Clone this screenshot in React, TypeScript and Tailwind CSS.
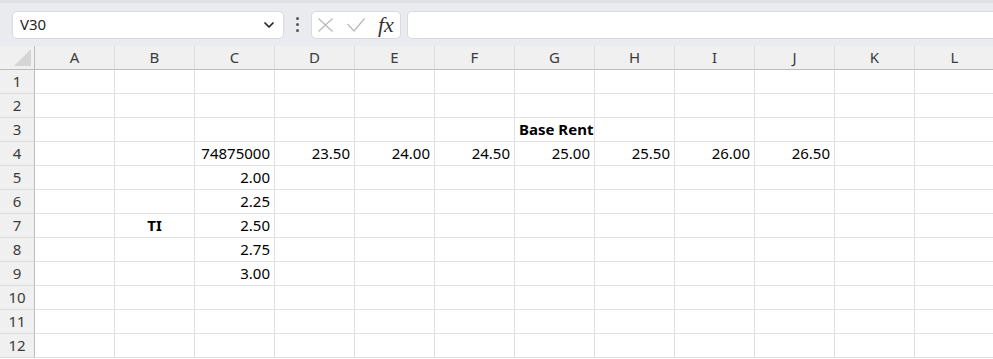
import { ChevronDown } from "lucide-react";

type Cell = {
  text: string;
  align?: "left" | "right" | "center";
  bold?: boolean;
};

const columns = ["A", "B", "C", "D", "E", "F", "G", "H", "I", "J", "K", "L"];

// sparse sheet data: row -> column -> cell
const sheet: Record<number, Record<string, Cell>> = {
  3: { G: { text: "Base Rent", align: "left", bold: true } },
  4: {
    C: { text: "74875000", align: "right" },
    D: { text: "23.50", align: "right" },
    E: { text: "24.00", align: "right" },
    F: { text: "24.50", align: "right" },
    G: { text: "25.00", align: "right" },
    H: { text: "25.50", align: "right" },
    I: { text: "26.00", align: "right" },
    J: { text: "26.50", align: "right" },
  },
  5: { C: { text: "2.00", align: "right" } },
  6: { C: { text: "2.25", align: "right" } },
  7: {
    B: { text: "TI", align: "center", bold: true },
    C: { text: "2.50", align: "right" },
  },
  8: { C: { text: "2.75", align: "right" } },
  9: { C: { text: "3.00", align: "right" } },
};

const rows = Array.from({ length: 12 }, (_, i) => i + 1);

function alignClass(align: Cell["align"]): string {
  if (align === "right") return "justify-end pr-[4px]";
  if (align === "center") return "justify-center";
  return "justify-start pl-[4px]";
}

function FormulaBar() {
  return (
    <div className="flex h-[46px] items-center border-t-[3px] border-[#dfe1e6] bg-[#e9ebef] pl-[12px]">
      <div className="flex h-[28px] w-[272px] items-center justify-between rounded-[5px] border border-[#d9dadd] bg-white pl-[7px] pr-[6px]">
        <span className="text-[15px] text-[#1f1f1f]">V30</span>
        <ChevronDown size={16} strokeWidth={2.6} className="text-[#222]" />
      </div>
      <div className="flex w-[27px] flex-col items-center justify-center gap-[3px]">
        <span className="h-[3px] w-[3px] rounded-full bg-[#555]" />
        <span className="h-[3px] w-[3px] rounded-full bg-[#555]" />
        <span className="h-[3px] w-[3px] rounded-full bg-[#555]" />
      </div>
      <div className="flex h-[28px] w-[90px] items-center rounded-[5px] border border-[#d9dadd] bg-white">
        <svg width="15" height="14" viewBox="0 0 15 14" className="ml-[6px]">
          <path d="M0.5 0.5 L14.5 13.5 M14.5 0.5 L0.5 13.5" stroke="#b8b8b8" strokeWidth="1.2" fill="none" />
        </svg>
        <svg width="18" height="14" viewBox="0 0 18 14" className="ml-[14px]">
          <path d="M0.5 6 L7 13 L17.5 0.5" stroke="#b8b8b8" strokeWidth="1.2" fill="none" />
        </svg>
        <span className="ml-[13px] font-['Liberation_Serif',serif] text-[22px] italic leading-none text-[#333]">
          fx
        </span>
      </div>
      <div className="ml-[6px] h-[28px] flex-1 rounded-l-[5px] border border-r-0 border-[#d9dadd] bg-white" />
    </div>
  );
}

function Grid() {
  return (
    <div className="grid grid-cols-[35px_repeat(12,80px)] grid-rows-[24px_repeat(12,24px)]">
      <div className="relative border-b border-r border-[#bdbdbd] bg-[#f0f0f0]">
        <div className="absolute bottom-[3px] right-[3px] h-0 w-0 border-b-[17px] border-l-[17px] border-b-[#d5d5d5] border-l-transparent" />
      </div>
      {columns.map((col) => (
        <div
          key={col}
          className="flex items-center justify-center border-b border-r border-b-[#bdbdbd] border-r-[#dcdcdc] bg-[#f0f0f0] text-[15px] text-[#3b3b3b]"
        >
          {col}
        </div>
      ))}
      {rows.map((row) => (
        <Row key={row} row={row} />
      ))}
    </div>
  );
}

function Row({ row }: { row: number }) {
  const data = sheet[row] ?? {};
  return (
    <>
      <div className="flex items-center justify-center border-b border-r border-b-[#dcdcdc] border-r-[#bdbdbd] bg-[#f0f0f0] text-[15px] text-[#3b3b3b]">
        {row}
      </div>
      {columns.map((col) => {
        const cell = data[col];
        return (
          <div
            key={col}
            className={`flex items-center overflow-visible whitespace-nowrap border-b border-r border-[#e1e1e1] bg-white text-[15px] text-black ${
              cell ? alignClass(cell.align) : ""
            } ${cell?.bold ? "font-bold" : ""}`}
          >
            {cell?.text}
          </div>
        );
      })}
    </>
  );
}

export default function App() {
  return (
    <div className="h-[359px] w-[993px] overflow-hidden bg-white font-['Noto_Sans',sans-serif] leading-none">
      <FormulaBar />
      <Grid />
    </div>
  );
}
